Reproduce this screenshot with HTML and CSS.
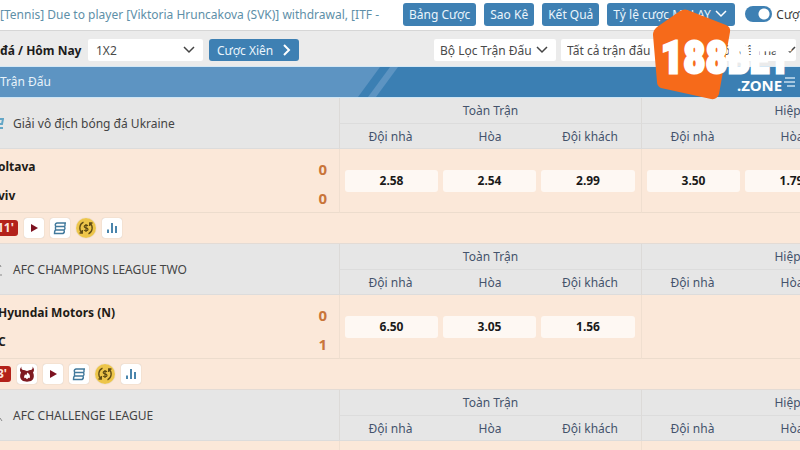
FILE: index.html
```html
<!DOCTYPE html>
<html lang="vi">
<head>
    <meta charset="UTF-8">
    <meta name="viewport" content="width=device-width, initial-scale=1.0">
    <title>Bóng đá / Hôm Nay</title>
    <link rel="stylesheet" href="styles.css">
</head>
<body>
<!-- shared icons -->
<svg class="sprite" aria-hidden="true">
    <symbol id="play" viewBox="0 0 20 20"><path d="M7 6l7 4-7 4z" fill="#7d1220"/></symbol>
    <symbol id="sheet" viewBox="0 0 20 20"><path d="M16 5H7Q4 6 6 8.500h8q2 1.500 0 3.500H6q-1.500 0-1.500 3.500H13q2-1 1-3.500M15 5v3.500M5.500 8.500V12" fill="none" stroke="#41799c" stroke-width="1.400"/></symbol>
    <symbol id="bars" viewBox="0 0 20 20"><path d="M6 15v-3.500M10 15V5M14 15V8" fill="none" stroke="#4a85ac" stroke-width="2"/></symbol>
    <symbol id="coin" viewBox="0 0 20 20">
        <circle cx="10" cy="10" r="10" fill="#edc54a"/>
        <path d="M7.500 4.200a6.300 6.300 0 0 0-1.500 10.500M6.300 12v3H3.500M12.500 15.800A6.300 6.300 0 0 0 14 5.300M13.700 8V5h2.800" fill="none" stroke="#5f4b14" stroke-width="1.300"/>
        <path d="M12 7.800c-.8-1-3.800-1-3.800.8 0 1.700 3.800 1 3.800 2.800 0 1.700-3.200 1.700-4 .6M10 6v8" fill="none" stroke="#5f4b14" stroke-width="1.200"/>
    </symbol>
    <symbol id="bull" viewBox="0 0 20 20"><path d="M4.500 2.500c-.5 2 .2 3 1.500 3.500h1l3 1 3-1h1c1.300-.5 2-1.500 1.500-3.500 2 2.200 1.900 4.500.5 6 1.200 2.500 1.200 5-.2 7l-1.800 1.500-4 .8-4-.8L4.200 15.500c-1.400-2-1.400-4.500-.2-7-1.400-1.500-1.500-3.800.5-6z" fill="#7f1a20"/><path d="M10.300 8.500c2.400 1.200 3.300 3.800 2.300 5.800l-1.100-.5-1.500 1.400-1.500-1.400-1 .5c-1.200-1.900.4-3 .6-4l1.200 1z" fill="#fff"/></symbol>
</svg>

<!-- top bar -->
<header class="topbar">
    <a class="ticker" href="#">[Tennis] Due to player [Viktoria Hruncakova (SVK)] withdrawal, [ITF -</a>
    <nav class="actions">
        <button class="btn" type="button">Bảng Cược</button>
        <button class="btn" type="button">Sao Kê</button>
        <button class="btn" type="button">Kết Quả</button>
        <select class="btn odds-type" aria-label="Tỷ lệ cược"><option>Tỷ lệ cược MALAY</option></select>
        <label class="switch"><input type="checkbox" checked>Cược nhanh</label>
    </nav>
</header>

<!-- filters -->
<div class="filters">
    <h1>đá / Hôm Nay</h1>
    <select class="market" aria-label="Loại cược"><option>1X2</option></select>
    <button class="btn parlay" type="button">Cược Xiên
        <svg width="8" height="12" viewBox="0 0 8 12"><path d="M1 1l5 5-5 5" fill="none" stroke="#fff" stroke-width="2"/></svg>
    </button>
    <div class="filter-group">
        <select class="by-match" aria-label="Bộ lọc"><option>Bộ Lọc Trận Đấu</option></select>
        <select class="by-scope" aria-label="Trận đấu"><option>Tất cả trận đấu</option></select>
        <select class="by-time" aria-label="Thời gian"><option>Từ trước đến nay</option></select>
    </div>
</div>

<div class="titlebar">
    <h2>Trận Đấu</h2>
    <svg class="stripes" width="50" height="30" viewBox="0 0 50 30"><path d="M0 30L22 0h28v30z" fill="#3b7fb3"/><path d="M10 30L32 0h8L18 30z" fill="#5d94c2"/></svg>
    <button class="sort" type="button" aria-label="Sắp xếp">
        <svg width="20" height="20" viewBox="0 0 20 20"><path d="M5 6h10M4 10h11M7 14h8" stroke="#c9dff0" stroke-width="1.500"/></svg>
    </button>
</div>

<table class="odds-table">
    <colgroup>
        <col class="c-league"><col class="c-side"><col class="c-mid"><col class="c-side"><col class="c-side"><col class="c-mid"><col class="c-side">
    </colgroup>

    <tbody>
        <tr class="period">
            <th class="league" rowspan="2"><svg class="crest" width="4" height="12" viewBox="0 0 4 12"><path d="M0 1h3l-1 5H0M0 10h3" fill="none" stroke="#63a6c6" stroke-width="2"/></svg>Giải vô địch bóng đá Ukraine</th>
            <th class="edge" colspan="3">Toàn Trận</th><th class="edge" colspan="3">Hiệp 1</th>
        </tr>
        <tr class="sides">
            <th class="edge">Đội nhà</th><th>Hòa</th><th>Đội khách</th>
            <th class="edge">Đội nhà</th><th>Hòa</th><th>Đội khách</th>
        </tr>
        <tr class="match">
            <td class="teams">
                <p><b>oltava</b><span class="score">0</span></p>
                <p><b>viv</b><span class="score">0</span></p>
            </td>
            <td class="edge"><button type="button">2.58</button></td><td><button type="button">2.54</button></td><td class="last"><button type="button">2.99</button></td>
            <td class="edge"><button type="button">3.50</button></td><td><button type="button">1.79</button></td><td class="last"></td>
        </tr>
        <tr class="tools">
            <td colspan="7"><div class="tool-list">
                <span class="clock">11'</span>
                <button type="button" aria-label="Trực tiếp"><svg><use href="#play"/></svg></button>
                <button type="button" aria-label="Thông tin"><svg><use href="#sheet"/></svg></button>
                <button class="round" type="button" aria-label="Cash out"><svg><use href="#coin"/></svg></button>
                <button type="button" aria-label="Thống kê"><svg><use href="#bars"/></svg></button>
            </div></td>
        </tr>
    </tbody>

    <tbody>
        <tr class="period">
            <th class="league" rowspan="2"><svg class="crest" width="4" height="12" viewBox="0 0 4 12"><path d="M0 1l1 2M0 11h2" fill="none" stroke="#888"/></svg>AFC CHAMPIONS LEAGUE TWO</th>
            <th class="edge" colspan="3">Toàn Trận</th><th class="edge" colspan="3">Hiệp 1</th>
        </tr>
        <tr class="sides">
            <th class="edge">Đội nhà</th><th>Hòa</th><th>Đội khách</th>
            <th class="edge">Đội nhà</th><th>Hòa</th><th>Đội khách</th>
        </tr>
        <tr class="match">
            <td class="teams">
                <p><b>Hyundai Motors (N)</b><span class="score">0</span></p>
                <p><b>C</b><span class="score">1</span></p>
            </td>
            <td class="edge"><button type="button">6.50</button></td><td><button type="button">3.05</button></td><td class="last"><button type="button">1.56</button></td>
            <td class="edge"></td><td></td><td class="last"></td>
        </tr>
        <tr class="tools">
            <td colspan="7"><div class="tool-list">
                <span class="clock">3'</span>
                <button type="button" aria-label="Bò tót"><svg><use href="#bull"/></svg></button>
                <button type="button" aria-label="Trực tiếp"><svg><use href="#play"/></svg></button>
                <button type="button" aria-label="Thông tin"><svg><use href="#sheet"/></svg></button>
                <button class="round" type="button" aria-label="Cash out"><svg><use href="#coin"/></svg></button>
                <button type="button" aria-label="Thống kê"><svg><use href="#bars"/></svg></button>
            </div></td>
        </tr>
    </tbody>

    <tbody>
        <tr class="period">
            <th class="league" rowspan="2"><svg class="crest" width="4" height="12" viewBox="0 0 4 12"><path d="M0 8l2 3" fill="none" stroke="#888"/></svg>AFC CHALLENGE LEAGUE</th>
            <th class="edge" colspan="3">Toàn Trận</th><th class="edge" colspan="3">Hiệp 1</th>
        </tr>
        <tr class="sides">
            <th class="edge">Đội nhà</th><th>Hòa</th><th>Đội khách</th>
            <th class="edge">Đội nhà</th><th>Hòa</th><th>Đội khách</th>
        </tr>
        <tr class="match">
            <td class="teams"></td>
            <td class="edge"></td><td></td><td class="last"></td>
            <td class="edge"></td><td></td><td class="last"></td>
        </tr>
    </tbody>
</table>

<!-- site logo, floats over the page -->
<svg class="logo" width="150" height="92" viewBox="0 0 150 92" role="img" aria-label="188BET.ZONE">
    <path d="M28 3q5-3 10 0l36 14q5 2 4 7l-11 62q-2 6-8 5L9 80q-4-2-4-6L1 27q0-5 4-8z" fill="#f66a1a"/>
    <text class="logo-main" x="9" y="65">188</text>
    <text class="logo-bet" x="76" y="65">BET</text>
    <text class="logo-zone" x="85" y="83">.ZONE</text>
</svg>
</body>
</html>
```
FILE: styles.css
```css
/* page */
* {
    box-sizing: border-box;
}
body {
    margin: 0;
    height: 100vh;
    overflow: hidden;
    font-family: "Noto Sans", "Open Sans", sans-serif;
    font-size: 12px;
    color: #3c3c3c;
    background-color: #fbe8d9;
}
button, select {
    font: inherit;
    border: 0;
    margin: 0;
}
h1, h2, p {
    margin: 0;
}
.sprite {
    display: none;
}

/* top bar */
.topbar {
    display: flex;
    align-items: center;
    height: 31px;
    padding-bottom: 2px;
    background-color: #fff;
    border-bottom: 1px solid #d6d6d6;
    white-space: nowrap;
}
.ticker {
    flex: 0 0 403px;
    color: #5e8fa8;
    text-decoration: none;
}
.actions {
    display: flex;
    align-items: center;
    gap: 8px;
    flex: none;
}
.btn {
    height: 23px;
    padding: 0 6px;
    border-radius: 3px;
    background-color: #3e80b3;
    color: #eaf5fc;
    white-space: nowrap;
}
select {
    appearance: none;
    height: 22px;
    padding: 0 8px;
    border-radius: 2px;
    color: #4a4a4a;
    background: #fff url("data:image/svg+xml,%3Csvg xmlns='http://www.w3.org/2000/svg' width='12' height='8'%3E%3Cpath d='M1 1l5 5 5-5' fill='none' stroke='%23444' stroke-width='1.500'/%3E%3C/svg%3E") no-repeat right 8px center;
}
select.odds-type {
    width: 128px;
    height: 23px;
    padding: 0 6px;
    color: #eaf5fc;
    background: #3e80b3 url("data:image/svg+xml,%3Csvg xmlns='http://www.w3.org/2000/svg' width='12' height='8'%3E%3Cpath d='M1 1l5 5 5-5' fill='none' stroke='%23fff' stroke-width='1.500'/%3E%3C/svg%3E") no-repeat right 8px center;
}
.switch {
    display: flex;
    align-items: center;
    gap: 4px;
    padding-left: 2px;
}
.switch input {
    appearance: none;
    width: 27px;
    height: 16px;
    margin: 0;
    border-radius: 8px;
    background: radial-gradient(circle at 19px 8px, #fff 5px, #3e80b3 6px);
}

/* filters */
.filters {
    display: flex;
    align-items: center;
    gap: 6px;
    height: 36px;
    padding-top: 3px;
    background-color: #ebebeb;
    border-bottom: 1px solid #d5e8f5;
    white-space: nowrap;
}
.filters h1 {
    width: 82px;
    font-size: 12px;
    color: #1c1c1c;
}
.filters .market {
    width: 115px;
}
.filters .parlay {
    display: flex;
    align-items: center;
    justify-content: space-between;
    width: 90px;
    height: 22px;
    padding: 0 8px;
}
.filter-group {
    display: flex;
    gap: 5px;
    margin-left: auto;
    padding-right: 4px;
}
.filter-group select {
    padding: 0 6px;
}
.by-match {
    width: 122px;
}
.by-scope {
    width: 116px;
}
.filter-group .by-time {
    width: 114px;
    padding: 0 0 0 6px;
    background-position: right 0 center;
}

/* title bar */
.titlebar {
    display: flex;
    align-items: center;
    height: 31px;
    color: #e8f3fa;
    background-color: #3b7fb3;
    border-bottom: 1px solid #cfe6f5;
}
.titlebar h2 {
    flex: 0 0 358px;
    line-height: 30px;
    font-size: 12px;
    font-weight: 400;
    background-color: #5d94c2;
}
.stripes {
    background-color: #5d94c2;
}
.sort {
    height: 20px;
    margin-left: auto;
    padding: 0;
    background: none;
}

/* odds */
.odds-table {
    width: 943px;
    table-layout: fixed;
    border-collapse: separate;
    border-spacing: 0;
}
.c-league {
    width: 339px;
}
.c-side {
    width: 102px;
}
.c-mid {
    width: 98px;
}
th {
    padding: 0;
    font-weight: 400;
    color: #44536c;
    background-color: #e6e6e6;
    border-bottom: 1px solid #dcdcdc;
}
.period th {
    height: 26px;
}
.sides th {
    height: 25px;
}
.edge {
    border-left: 1px solid #dcdad8;
}
th.league {
    color: #444;
    text-align: left;
}
.crest {
    margin-right: 9px;
    vertical-align: middle;
}
td {
    padding: 0 3px 0 2px;
}
.match td {
    height: 64px;
    border-bottom: 1px solid #ecdccd;
}
.match td.edge {
    padding: 0 3px 0 5px;
    border-left-color: #f0dfd0;
}
.match td.last {
    padding: 0 6px 0 2px;
}
.match button {
    display: block;
    width: 100%;
    height: 22px;
    padding: 0;
    border-radius: 3px;
    font-weight: 700;
    color: #1a1a1a;
    background-color: #fef8f3;
}
.match td.teams {
    padding: 5px 12px 0 0;
}
.teams p {
    display: flex;
    justify-content: space-between;
    height: 29px;
    line-height: 26px;
    color: #221b16;
}
.teams b {
    margin-left: -2px;
}
.score {
    padding-top: 2px;
    font-size: 15px;
    font-weight: 700;
    color: #c9753a;
}

/* live tools */
.tools td {
    height: 31px;
    padding: 0;
    border-bottom: 1px solid #e3dbd5;
}
.tool-list {
    display: flex;
    align-items: center;
    gap: 6px;
    margin-left: -3px;
}
.clock {
    height: 16px;
    padding-right: 4px;
    line-height: 16px;
    font-weight: 700;
    color: #fbe3df;
    background-color: #b3211a;
    border-radius: 0 3px 3px 0;
}
.tool-list button {
    width: 20px;
    height: 20px;
    padding: 0;
    border-radius: 3px;
    background-color: #fff;
    box-shadow: 0 0 1px #b9a99c;
}
.tool-list .round {
    border-radius: 50%;
}
.tool-list svg {
    display: block;
    width: 20px;
    height: 20px;
}

/* logo */
.logo {
    position: absolute;
    top: 8px;
    right: -2px;
}
.logo text {
    fill: #fff;
    font-weight: 700;
}
.logo-main {
    font-family: "Roboto Condensed", "Roboto", sans-serif;
    font-size: 44px;
    stroke: #fff;
    stroke-width: 3px;
}
.logo-bet {
    font-family: "Roboto Condensed", "Roboto", sans-serif;
    font-size: 39px;
    stroke: #fff;
    stroke-width: 3px;
}
.logo-zone {
    font-size: 15px;
}
```
